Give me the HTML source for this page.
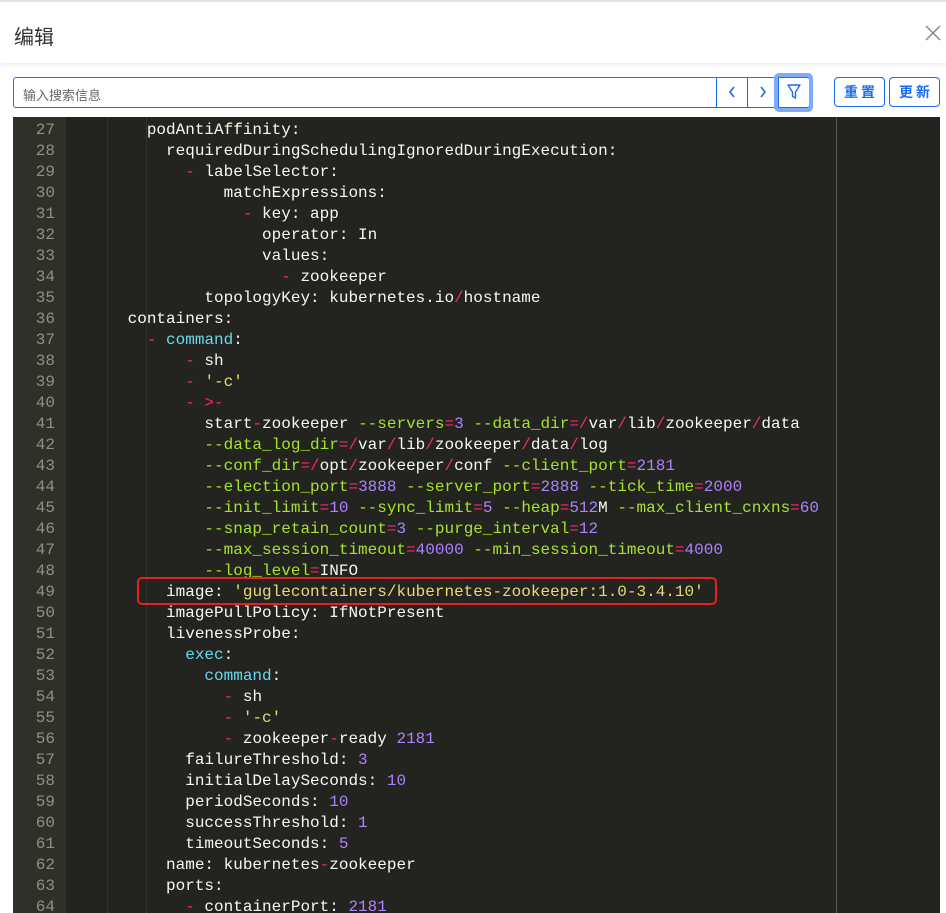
<!DOCTYPE html>
<html><head><meta charset="utf-8">
<style>
*{margin:0;padding:0;box-sizing:border-box}
body{width:946px;height:913px;overflow:hidden;background:#fff;font-family:"Liberation Sans","Noto Sans CJK SC",sans-serif;position:relative}
.topline{position:absolute;left:0;top:0;width:946px;height:2px;background:#e4e4e4}
.hdr{position:absolute;left:0;top:2px;width:946px;height:61px;background:#fff;box-shadow:0 2px 4px rgba(0,0,0,.08)}
.title{position:absolute;left:14px;top:19px;font-size:20px;color:#333}
.close{position:absolute;left:924px;top:22px;width:18px;height:18px}
.search{position:absolute;left:13px;top:77px;width:797px;height:31px;border:1px solid #1a6cf0;border-radius:3px;background:#fff}
.search .ph{position:absolute;left:9px;top:7px;font-size:13px;color:#666}
.sb{position:absolute;top:-1px;height:31px;border-left:1px solid #1a6cf0}
.glow{position:absolute;left:774px;top:73px;width:39px;height:39px;border:4px solid #7faaf5;border-radius:5px}
.btn{position:absolute;top:77px;height:30px;width:51px;border:1px solid #1a6cf0;border-radius:4px;color:#1a6cf0;font-size:14px;text-align:center;line-height:28px;letter-spacing:3px;padding-left:3px;font-weight:bold}
.ed{position:absolute;left:13px;top:117px;width:927px;height:796px;background:#23241f;overflow:hidden}
.gut{position:absolute;left:0;top:0;width:53px;height:100%;background:#2f3129}
.margin{position:absolute;left:823px;top:0;width:1px;height:100%;background:#555}
.lines{position:absolute;left:0;top:-18px;width:927px;font-family:"Liberation Mono",monospace;font-size:16px;line-height:21px;color:#f8f8f2}
.ln{display:block;height:21px;position:relative}
.n{position:absolute;left:0;width:42px;text-align:right;color:#8f908a}
.c{position:absolute;left:57px;white-space:pre}
.r{color:#f92672}.k{color:#66d9ef}.s{color:#e6db74}.p{color:#ae81ff}.g{color:#a6e22e}
.guide{position:absolute;top:0;height:100%;border-left:1px dotted #3e3f39}
.box{position:absolute;left:137px;top:577px;width:580px;height:28px;border:2px solid #e8201e;border-radius:5px}
</style></head><body>
<div class="topline"></div>
<div class="hdr"><div class="title">编辑</div>
<svg class="close" viewBox="0 0 18 18"><path d="M2 2L16 16M16 2L2 16" stroke="#888" stroke-width="1.5"/></svg></div>
<div class="search"><span class="ph">输入搜索信息</span>
<div class="sb" style="left:702px;width:31px"><svg width="30" height="30" viewBox="0 0 30 30"><path d="M17 10l-4 5 4 5" fill="none" stroke="#1a6cf0" stroke-width="1.6"/></svg></div>
<div class="sb" style="left:733px;width:31px"><svg width="30" height="30" viewBox="0 0 30 30"><path d="M13 10l4 5-4 5" fill="none" stroke="#1a6cf0" stroke-width="1.6"/></svg></div>
<div class="sb" style="left:764px;width:32px"><svg width="31" height="30" viewBox="0 0 31 30"><path d="M9 8h12l-4.5 7v6l-3-1.5V15z" fill="none" stroke="#1a6cf0" stroke-width="1.4" stroke-linejoin="round"/></svg></div>
</div>
<div class="glow"></div>
<div class="btn" style="left:834px">重置</div>
<div class="btn" style="left:889px">更新</div>
<div class="ed">
<div class="gut"></div>
<div class="guide" style="left:94px"></div>
<div class="guide" style="left:133px"></div>
<div class="margin"></div>
<div class="lines">
<span class="ln"><span class="n">26</span><span class="c">      affinity:</span></span>
<span class="ln"><span class="n">27</span><span class="c">        podAntiAffinity:</span></span>
<span class="ln"><span class="n">28</span><span class="c">          requiredDuringSchedulingIgnoredDuringExecution:</span></span>
<span class="ln"><span class="n">29</span><span class="c">            <span class="r">-</span> labelSelector:</span></span>
<span class="ln"><span class="n">30</span><span class="c">                matchExpressions:</span></span>
<span class="ln"><span class="n">31</span><span class="c">                  <span class="r">-</span> key: app</span></span>
<span class="ln"><span class="n">32</span><span class="c">                    operator: In</span></span>
<span class="ln"><span class="n">33</span><span class="c">                    values:</span></span>
<span class="ln"><span class="n">34</span><span class="c">                      <span class="r">-</span> zookeeper</span></span>
<span class="ln"><span class="n">35</span><span class="c">              topologyKey: kubernetes.io<span class="r">/</span>hostname</span></span>
<span class="ln"><span class="n">36</span><span class="c">      containers:</span></span>
<span class="ln"><span class="n">37</span><span class="c">        <span class="r">-</span> <span class="k">command</span>:</span></span>
<span class="ln"><span class="n">38</span><span class="c">            <span class="r">-</span> sh</span></span>
<span class="ln"><span class="n">39</span><span class="c">            <span class="r">-</span> <span class="s">'-c'</span></span></span>
<span class="ln"><span class="n">40</span><span class="c">            <span class="r">- &gt;-</span></span></span>
<span class="ln"><span class="n">41</span><span class="c">              start<span class="r">-</span>zookeeper <span class="g">--servers</span><span class="r">=</span><span class="p">3</span> <span class="g">--data_dir</span><span class="r">=/</span>var<span class="r">/</span>lib<span class="r">/</span>zookeeper<span class="r">/</span>data</span></span>
<span class="ln"><span class="n">42</span><span class="c">              <span class="g">--data_log_dir</span><span class="r">=/</span>var<span class="r">/</span>lib<span class="r">/</span>zookeeper<span class="r">/</span>data<span class="r">/</span>log</span></span>
<span class="ln"><span class="n">43</span><span class="c">              <span class="g">--conf_dir</span><span class="r">=/</span>opt<span class="r">/</span>zookeeper<span class="r">/</span>conf <span class="g">--client_port</span><span class="r">=</span><span class="p">2181</span></span></span>
<span class="ln"><span class="n">44</span><span class="c">              <span class="g">--election_port</span><span class="r">=</span><span class="p">3888</span> <span class="g">--server_port</span><span class="r">=</span><span class="p">2888</span> <span class="g">--tick_time</span><span class="r">=</span><span class="p">2000</span></span></span>
<span class="ln"><span class="n">45</span><span class="c">              <span class="g">--init_limit</span><span class="r">=</span><span class="p">10</span> <span class="g">--sync_limit</span><span class="r">=</span><span class="p">5</span> <span class="g">--heap</span><span class="r">=</span><span class="p">512</span>M <span class="g">--max_client_cnxns</span><span class="r">=</span><span class="p">60</span></span></span>
<span class="ln"><span class="n">46</span><span class="c">              <span class="g">--snap_retain_count</span><span class="r">=</span><span class="p">3</span> <span class="g">--purge_interval</span><span class="r">=</span><span class="p">12</span></span></span>
<span class="ln"><span class="n">47</span><span class="c">              <span class="g">--max_session_timeout</span><span class="r">=</span><span class="p">40000</span> <span class="g">--min_session_timeout</span><span class="r">=</span><span class="p">4000</span></span></span>
<span class="ln"><span class="n">48</span><span class="c">              <span class="g">--log_level</span><span class="r">=</span>INFO</span></span>
<span class="ln"><span class="n">49</span><span class="c">          image: <span class="s">'guglecontainers/kubernetes-zookeeper:1.0-3.4.10'</span></span></span>
<span class="ln"><span class="n">50</span><span class="c">          imagePullPolicy: IfNotPresent</span></span>
<span class="ln"><span class="n">51</span><span class="c">          livenessProbe:</span></span>
<span class="ln"><span class="n">52</span><span class="c">            <span class="k">exec</span>:</span></span>
<span class="ln"><span class="n">53</span><span class="c">              <span class="k">command</span>:</span></span>
<span class="ln"><span class="n">54</span><span class="c">                <span class="r">-</span> sh</span></span>
<span class="ln"><span class="n">55</span><span class="c">                <span class="r">-</span> <span class="s">'-c'</span></span></span>
<span class="ln"><span class="n">56</span><span class="c">                <span class="r">-</span> zookeeper<span class="r">-</span>ready <span class="p">2181</span></span></span>
<span class="ln"><span class="n">57</span><span class="c">            failureThreshold: <span class="p">3</span></span></span>
<span class="ln"><span class="n">58</span><span class="c">            initialDelaySeconds: <span class="p">10</span></span></span>
<span class="ln"><span class="n">59</span><span class="c">            periodSeconds: <span class="p">10</span></span></span>
<span class="ln"><span class="n">60</span><span class="c">            successThreshold: <span class="p">1</span></span></span>
<span class="ln"><span class="n">61</span><span class="c">            timeoutSeconds: <span class="p">5</span></span></span>
<span class="ln"><span class="n">62</span><span class="c">          name: kubernetes<span class="r">-</span>zookeeper</span></span>
<span class="ln"><span class="n">63</span><span class="c">          ports:</span></span>
<span class="ln"><span class="n">64</span><span class="c">            <span class="r">-</span> containerPort: <span class="p">2181</span></span></span>
</div>
</div>
<div class="box"></div>
</body></html>
